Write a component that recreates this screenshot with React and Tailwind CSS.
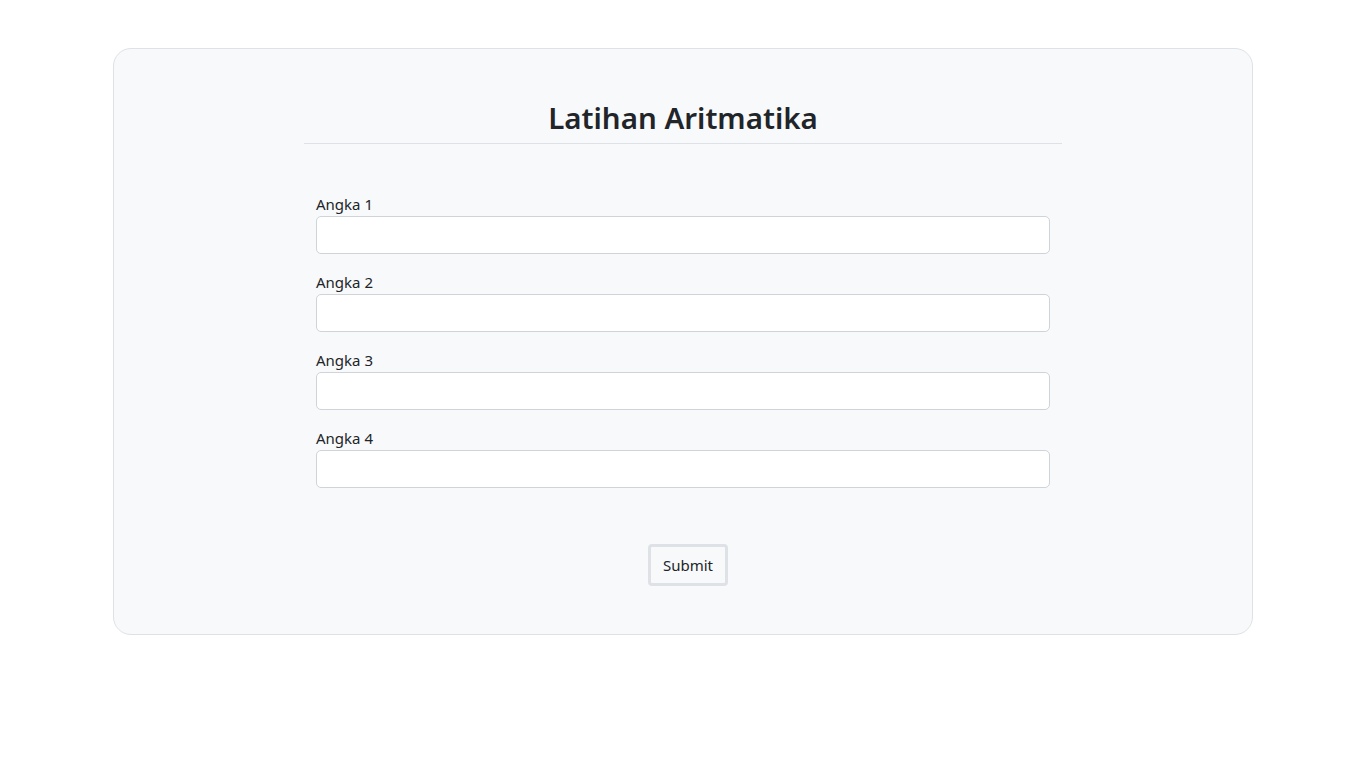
export default function App() {
  const fields = ["Angka 1", "Angka 2", "Angka 3", "Angka 4"];
  return (
    <div className="min-h-[768px] bg-white text-[#212529]" style={{ fontFamily: '"Segoe UI", "Noto Sans", sans-serif' }}>
      <div className="pt-[48px] px-[113px]">
        <div className="rounded-[18px] border border-[#dee2e6] bg-[#f8f9fa] pt-[51px] pb-[48px]">
          <div className="mx-auto w-[758px]">
            <h2 className="text-center text-[29.5px] font-semibold leading-[36px] pb-[7px] border-b border-[#dee2e6]">
              Latihan Aritmatika
            </h2>
            <form className="mt-[48px] px-[12px]" onSubmit={(e) => e.preventDefault()}>
              {fields.map((f) => (
                <div key={f} className="mb-[16px]">
                  <label className="block text-[15px] leading-[24px]">{f}</label>
                  <input type="text" className="block w-[734px] h-[38px] rounded-[5px] border border-[#ced4da] bg-white px-3 outline-none" />
                </div>
              ))}
              <div className="flex justify-center pt-[40px]">
                <button type="submit" className="ml-[10px] w-[80px] h-[42px] rounded-[4px] border-[3px] border-[#dee2e6] bg-[#f8f9fa] text-[15px] text-[#212529]">
                  Submit
                </button>
              </div>
            </form>
          </div>
        </div>
      </div>
    </div>
  );
}
